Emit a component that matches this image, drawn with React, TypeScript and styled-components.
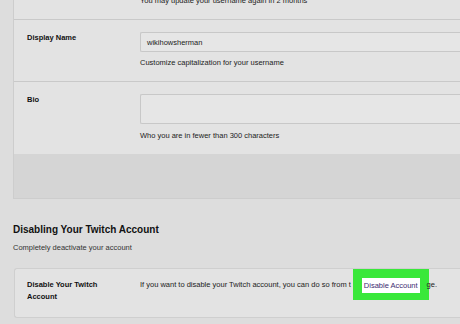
import styled, { createGlobalStyle } from "styled-components";

const GlobalStyle = createGlobalStyle`
  html, body {
    margin: 0;
    padding: 0;
    background: #dddddd;
    overflow: hidden;
  }
  body {
    font-family: "Liberation Sans", Arial, sans-serif;
    color: #1e1e1e;
  }
`;

// cards run off the right edge in the reference, so no right borders
const Page = styled.div`
  padding-left: 13px;
`;

const SettingsCard = styled.div`
  margin-top: -17px;
  background: #e3e3e3;
  border: 1px solid #cdcdcd;
  border-right: none;
`;

const Row = styled.div<{ divided?: boolean }>`
  display: grid;
  grid-template-columns: 113px 1fr;
  padding: 12px 0 13px 13px;
  border-top: ${(p) => (p.divided ? "1px solid #c9c9c9" : "none")};
`;

const Label = styled.div`
  font-size: 7.5px;
  line-height: 10px;
  font-weight: bold;
  color: #111;
  padding-top: 1px;
`;

const Field = styled.div`
  display: flex;
  flex-direction: column;
`;

const Input = styled.div`
  height: 18px;
  display: flex;
  align-items: center;
  padding-left: 6px;
  background: #e6e6e6;
  border: 1px solid #c8c8c8;
  border-right: none;
  border-radius: 2px 0 0 2px;
  font-size: 7.5px;
  color: #222;
`;

const TextArea = styled.div`
  height: 28px;
  background: #e6e6e6;
  border: 1px solid #c8c8c8;
  border-right: none;
  border-radius: 2px 0 0 2px;
`;

const Help = styled.div<{ gap?: number }>`
  margin-top: ${(p) => p.gap ?? 6}px;
  font-size: 7.5px;
  line-height: 10px;
  color: #222;
`;

const Footer = styled.div`
  height: 44px;
  background: #d5d5d5;
`;

const Heading = styled.h2`
  margin: 25px 0 0;
  font-size: 10px;
  line-height: 12px;
  font-weight: bold;
  color: #111;
`;

const Sub = styled.p`
  margin: 7px 0 0;
  font-size: 7.5px;
  line-height: 10px;
  color: #333;
`;

const DisableCard = styled.div`
  margin: 15px 0 0 1px;
  display: grid;
  grid-template-columns: 113px 1fr;
  padding: 10px 0 14px 12px;
  background: #e3e3e3;
  border: 1px solid #cfcfcf;
  border-right: none;
  border-radius: 3px 0 0 3px;
`;

const DisableLabel = styled.div`
  font-size: 7.5px;
  line-height: 12px;
  font-weight: bold;
  color: #111;
  width: 80px;
`;

const Line = styled.div`
  font-size: 7.5px;
  line-height: 12px;
  color: #222;
  white-space: nowrap;
`;

const Highlight = styled.span`
  display: inline-block;
  vertical-align: middle;
  margin: -12px -2px -10px 2px;
  padding: 9px 9px 7px;
  background: #39e83a;
`;

const LinkBox = styled.span`
  display: block;
  height: 15px;
  line-height: 15px;
  padding: 0 2px;
  background: #ffffff;
  color: #3e2b72;
  font-size: 7.5px;
`;

export default function App() {
  return (
    <>
      <GlobalStyle />
      <Page>
        <SettingsCard>
          <Row>
            <div />
            <Help gap={0}>You may update your username again in 2 months</Help>
          </Row>
          <Row divided>
            <Label>Display Name</Label>
            <Field>
              <Input>wikihowsherman</Input>
              <Help>Customize capitalization for your username</Help>
            </Field>
          </Row>
          <Row divided>
            <Label>Bio</Label>
            <Field>
              <TextArea />
              <Help gap={7}>Who you are in fewer than 300 characters</Help>
            </Field>
          </Row>
          <Footer />
        </SettingsCard>
        <Heading>Disabling Your Twitch Account</Heading>
        <Sub>Completely deactivate your account</Sub>
        <DisableCard>
          <DisableLabel>Disable Your Twitch Account</DisableLabel>
          <Line>
            If you want to disable your Twitch account, you can do so from t
            <Highlight>
              <LinkBox>Disable Account</LinkBox>
            </Highlight>
            ge.
          </Line>
        </DisableCard>
      </Page>
    </>
  );
}
